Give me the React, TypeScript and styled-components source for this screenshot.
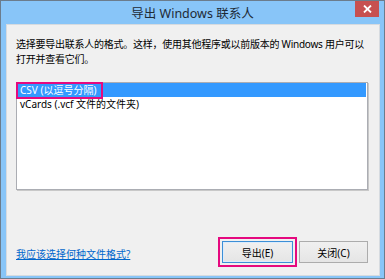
import React from "react";
import styled, { createGlobalStyle } from "styled-components";

const Global = createGlobalStyle`
  html, body { margin: 0; padding: 0; background: #ffffff; }
  body { width: 385px; height: 279px; overflow: hidden; }
`;

const FONT = `"Noto Sans", "Noto Sans CJK SC", sans-serif`;

const Window = styled.div`
  box-sizing: border-box;
  width: 385px;
  height: 279px;
  border: 1px solid #6b7c8c;
  background: #88c5f8;
  display: flex;
  flex-direction: column;
  font-family: ${FONT};
`;

const TitleBar = styled.div`
  position: relative;
  height: 23px;
  display: flex;
  align-items: center;
  justify-content: center;
  color: #1e2a36;
  font-size: 12.5px;
`;

const CloseButton = styled.div`
  position: absolute;
  top: 0;
  right: 5px;
  width: 24px;
  height: 16px;
  background: #c75050;
  display: flex;
  align-items: center;
  justify-content: center;
`;

const Client = styled.div`
  flex: 1;
  margin: 0 4px 2px 5px;
  background: #f0f0f0;
  border: 1px solid #d6dbe0;
  display: flex;
  flex-direction: column;
  padding: 12px 11px 8px 9px;
`;

const Intro = styled.p`
  margin: 0;
  font-size: 10px;
  line-height: 15px;
  letter-spacing: -0.25px;
  white-space: nowrap;
  color: #000;
`;

const ListBox = styled.div`
  margin-top: 15px;
  height: 106px;
  background: #fff;
  border: 1px solid #abadb3;
  box-shadow: 1px 1px 0 #c8c8c8;
  padding: 0 1px;
  display: flex;
  flex-direction: column;
`;

const Item = styled.div<{ $selected?: boolean }>`
  position: relative;
  height: 14px;
  line-height: 14px;
  padding-left: 2px;
  font-size: 10px;
  color: ${(p) => (p.$selected ? "#fff" : "#000")};
  background: ${(p) => (p.$selected ? "#3399ff" : "transparent")};
`;

const Highlight = styled.span`
  position: absolute;
  left: -2px;
  top: -1px;
  width: 87px;
  height: 17px;
  border: 2px solid #e5097f;
  box-sizing: border-box;
`;

const Footer = styled.div`
  margin-top: auto;
  display: flex;
  align-items: center;
  justify-content: space-between;
`;

const Link = styled.a`
  font-size: 10px;
  color: #0066cc;
  text-decoration: underline;
  margin-top: 2px;
`;

const Buttons = styled.div`
  display: flex;
  gap: 2px;
  align-items: center;
`;

const Frame = styled.div`
  padding: 2px;
  border: 2px solid #e5097f;
  display: flex;
`;

const Button = styled.button<{ $default?: boolean }>`
  box-sizing: border-box;
  width: ${(p) => (p.$default ? "71px" : "69px")};
  height: 22px;
  font-family: ${FONT};
  font-size: 10px;
  color: #000;
  border: 1px solid ${(p) => (p.$default ? "#3c8fd6" : "#acacac")};
  background: linear-gradient(#f0f0f0, #e5e5e5);
  box-shadow: ${(p) => (p.$default ? "inset 0 0 0 1px #dcecfc" : "none")};
  padding: 0;
`;

export default function App() {
  return (
    <>
      <Global />
      <Window>
        <TitleBar>
          导出 Windows 联系人
          <CloseButton>
            <svg width="9" height="8" viewBox="0 0 9 8">
              <path d="M1 0.5 L8 7.5 M8 0.5 L1 7.5" stroke="#fff" strokeWidth="1.8" />
            </svg>
          </CloseButton>
        </TitleBar>
        <Client>
          <Intro>
            选择要导出联系人的格式。这样，使用其他程序或以前版本的 Windows 用户可以
            <br />
            打开并查看它们。
          </Intro>
          <ListBox>
            <Item $selected>
              CSV (以逗号分隔)
              <Highlight />
            </Item>
            <Item>vCards (.vcf 文件的文件夹)</Item>
          </ListBox>
          <Footer>
            <Link href="#">我应该选择何种文件格式?</Link>
            <Buttons>
              <Frame>
                <Button $default>导出(E)</Button>
              </Frame>
              <Button>关闭(C)</Button>
            </Buttons>
          </Footer>
        </Client>
      </Window>
    </>
  );
}
